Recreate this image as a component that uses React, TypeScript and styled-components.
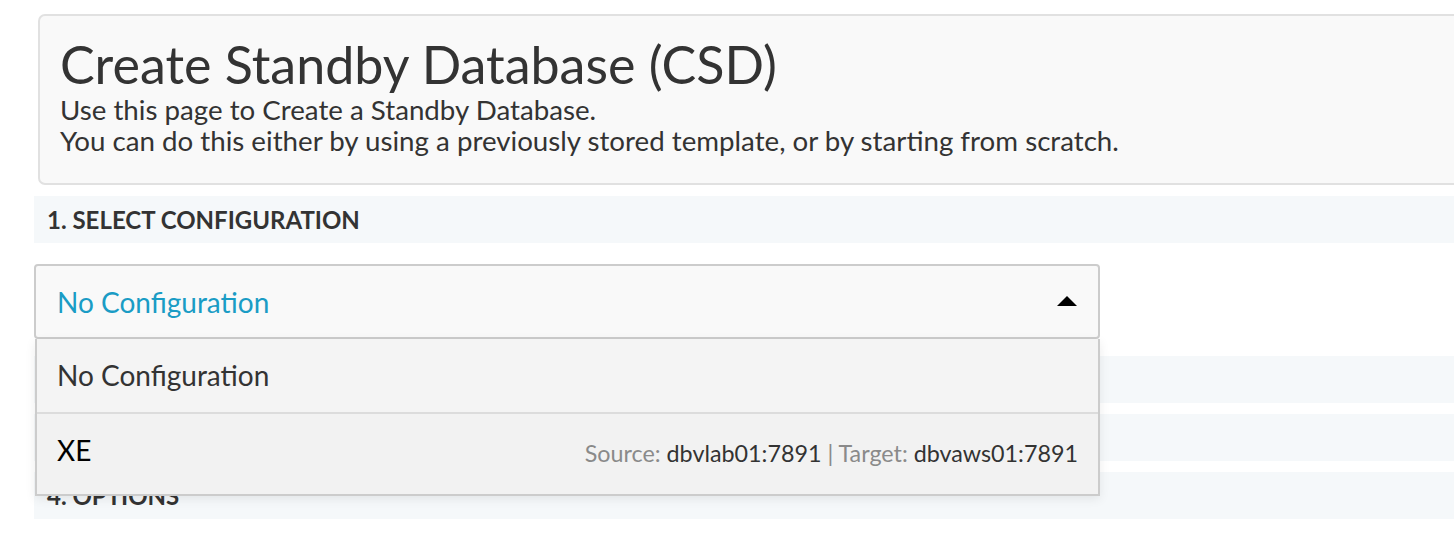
import React from 'react'
import styled, { createGlobalStyle } from 'styled-components'

const GlobalStyle = createGlobalStyle`
  html, body {
    margin: 0;
    padding: 0;
    background: #fff;
    overflow: hidden;
  }
  body {
    font-family: Lato, 'Open Sans', 'Liberation Sans', sans-serif;
    color: #333;
  }
`

interface IConfig {
  name: string
  source?: string
  target?: string
}

const configs: Array<IConfig> = [
  { name: 'No Configuration' },
  { name: 'XE', source: 'dbvlab01:7891', target: 'dbvaws01:7891' },
]

const sections = ['1. Select Configuration', '2. Source Database', '3. Target Database', '4. Options']

const Page = styled.div`
  padding: 14px 0 0 34px;
  margin-right: -60px;
`

const Jumbotron = styled.div`
  margin-left: 4px;
  padding: 18px 22px 27px 20px;
  background: #f9f9f9;
  border: 2px solid #e1e1e1;
  border-radius: 7px;
`

const Title = styled.h1`
  margin: 0;
  font-size: 52px;
  font-weight: 400;
  line-height: 60px;
  color: #333;
`

const Lead = styled.p`
  margin: 0;
  font-size: 27.7px;
  line-height: 31px;
  color: #333;
`

const SectionHeader = styled.div<{ $gap?: number }>`
  margin-top: ${(p) => p.$gap ?? 11}px;
  height: 47px;
  display: flex;
  align-items: center;
  padding-left: 13px;
  background: #f5f8fa;
  font-size: 24px;
  font-weight: 700;
  text-transform: uppercase;
  color: #333;
`

const SelectWrap = styled.div`
  position: relative;
  width: 1066px;
  margin-top: 21px;
  margin-bottom: 17px;
`

const SelectBox = styled.div`
  box-sizing: border-box;
  height: 75px;
  display: flex;
  align-items: center;
  justify-content: space-between;
  padding: 0 21px 0 21px;
  background: #f9f9f9;
  border: 2px solid #cccccc;
  border-radius: 4px;
  font-size: 28px;
  color: #1a9cc5;
`

const Caret = styled.span`
  width: 0;
  height: 0;
  border-left: 10px solid transparent;
  border-right: 10px solid transparent;
  border-bottom: 10px solid #000;
  margin-top: -2px;
`

const Menu = styled.div`
  position: absolute;
  top: 75px;
  left: 1px;
  right: 0;
  z-index: 2;
  background: #f4f4f4;
  border: 2px solid #cccccc;
  border-top: none;
  box-shadow: 0 3px 10px rgba(0, 0, 0, 0.08);
`

const Option = styled.div<{ $tall?: boolean; $shade?: string }>`
  height: ${(p) => (p.$tall ? 80 : 73)}px;
  display: flex;
  align-items: center;
  justify-content: space-between;
  padding: 0 20px 0 20px;
  background: ${(p) => p.$shade ?? '#f4f4f4'};
  font-size: 28px;
  color: #333;

  & + & {
    border-top: 2px solid #dcdcdc;
  }
`

const OptionName = styled.span<{ $dark?: boolean }>`
  color: ${(p) => (p.$dark ? '#000' : '#333')};
  margin-top: ${(p) => (p.$dark ? -8 : -2)}px;
`

const Detail = styled.span`
  font-size: 23.3px;
  color: #333;
  margin-top: -3px;
`

const Label = styled.span`
  color: #8a8a8a;
`

const App: React.FC = () => {
  return (
    <>
      <GlobalStyle />
      <Page>
        <Jumbotron>
          <Title>Create Standby Database (CSD)</Title>
          <Lead>
            Use this page to Create a Standby Database.
            <br />
            You can do this either by using a previously stored template, or by starting from scratch.
          </Lead>
        </Jumbotron>
        <SectionHeader>{sections[0]}</SectionHeader>
        <SelectWrap>
          <SelectBox>
            <span>No Configuration</span>
            <Caret />
          </SelectBox>
          <Menu>
            {configs.map((item, i) => (
              <Option key={item.name} $tall={i > 0} $shade={i > 0 ? '#f2f2f2' : '#f4f4f4'}>
                <OptionName $dark={i > 0}>{item.name}</OptionName>
                {item.source && (
                  <Detail>
                    <Label>Source:</Label> {item.source} <Label>|</Label> <Label>Target:</Label> {item.target}
                  </Detail>
                )}
              </Option>
            ))}
          </Menu>
        </SelectWrap>
        {sections.slice(1).map((s, i) => (
          <SectionHeader key={s} $gap={i === 0 ? 0 : 11}>
            {s}
          </SectionHeader>
        ))}
      </Page>
    </>
  )
}

export default App
